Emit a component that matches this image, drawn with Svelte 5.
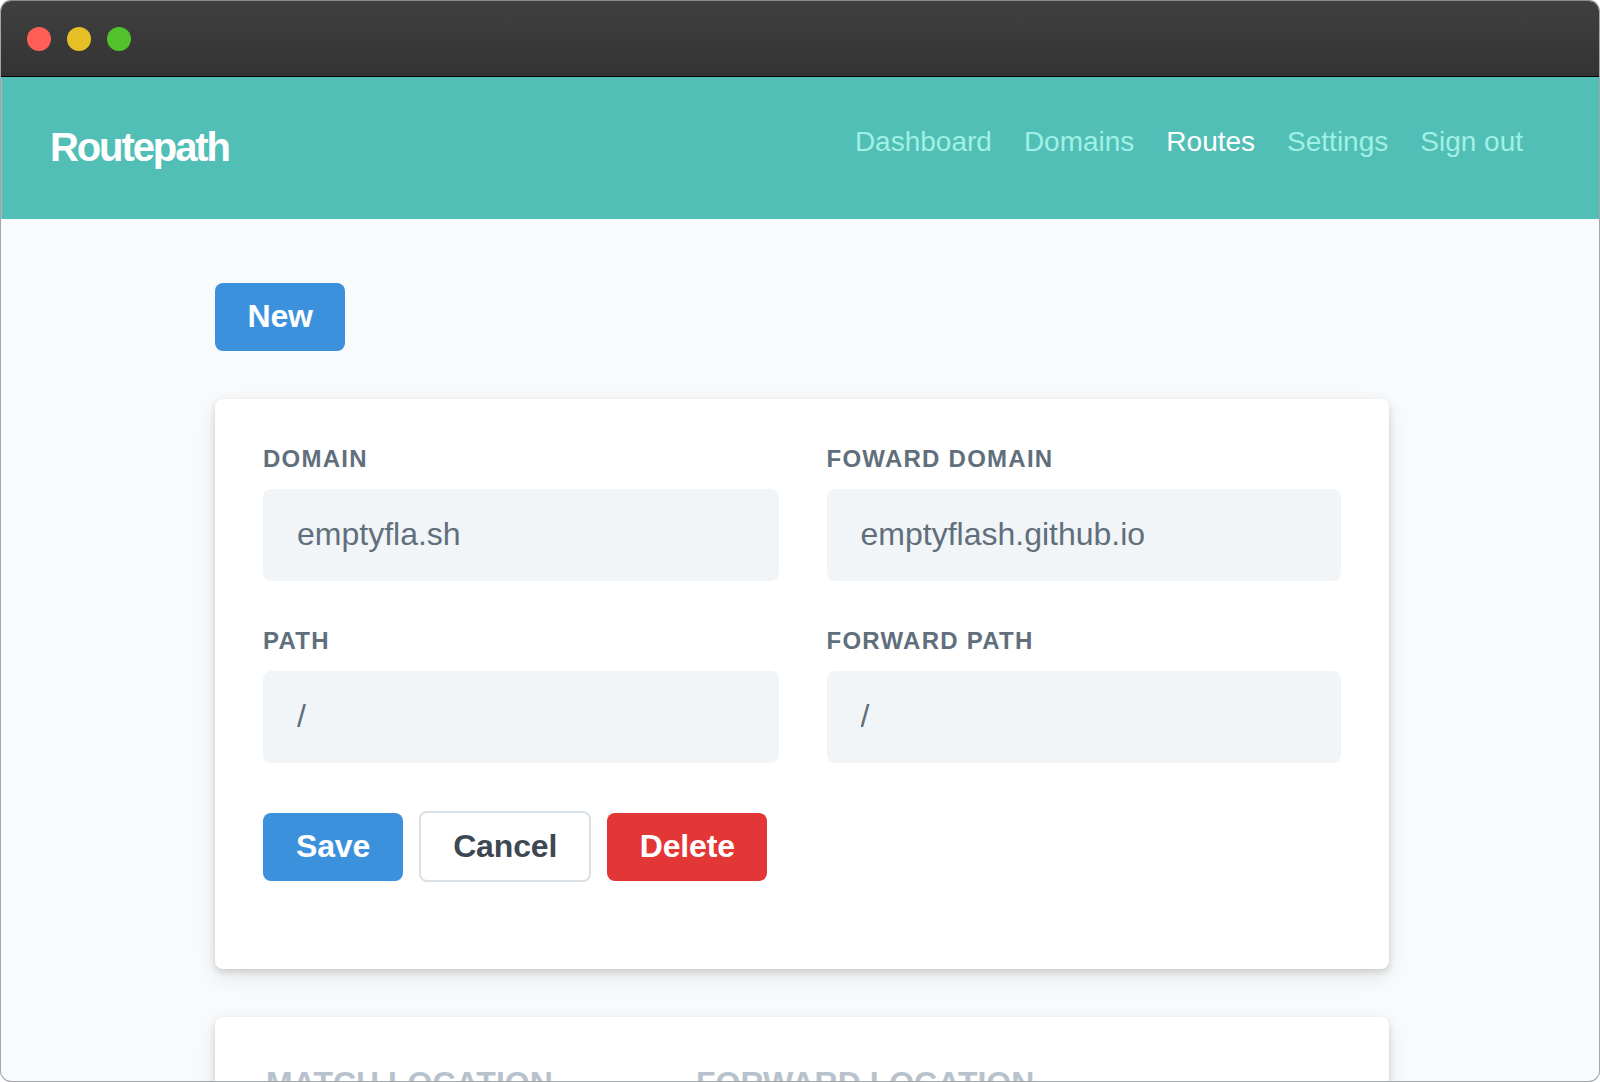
<script>
  const links = [
    { label: 'Dashboard', active: false },
    { label: 'Domains', active: false },
    { label: 'Routes', active: true },
    { label: 'Settings', active: false },
    { label: 'Sign out', active: false }
  ];
  const fields = [
    { label: 'Domain', value: 'emptyfla.sh' },
    { label: 'Foward Domain', value: 'emptyflash.github.io' },
    { label: 'Path', value: '/' },
    { label: 'Forward Path', value: '/' }
  ];
</script>

<div class="window">
  <div class="titlebar">
    <span class="dot red"></span>
    <span class="dot yellow"></span>
    <span class="dot green"></span>
  </div>
  <header class="header">
    <div class="logo">Routepath</div>
    <nav class="nav">
      {#each links as link}
        <a href="#top" class:active={link.active}>{link.label}</a>
      {/each}
    </nav>
  </header>
  <main class="main">
    <button class="btn blue new">New</button>
    <section class="card form">
      <div class="grid">
        {#each fields as f}
          <label class="field">
            <span class="label">{f.label}</span>
            <input class="input" value={f.value} />
          </label>
        {/each}
      </div>
      <div class="actions">
        <button class="btn blue save">Save</button>
        <button class="btn outline">Cancel</button>
        <button class="btn danger">Delete</button>
      </div>
    </section>
    <section class="card list">
      <div class="thead">
        <span class="th first">Match Location</span>
        <span class="th">Forward Location</span>
      </div>
    </section>
  </main>
</div>

<style>
  :global(body) {
    margin: 0;
    background: #fff;
    font-family: "Liberation Sans", Arial, sans-serif;
  }
  .window {
    box-sizing: border-box;
    height: 1082px;
    overflow: hidden;
    background: #f8fafc;
    border: 1px solid #a3a6a9;
    border-top-color: #8a8a8a;
    border-radius: 11px;
  }
  .titlebar {
    box-sizing: border-box;
    height: 76px;
    display: flex;
    align-items: center;
    gap: 16px;
    padding: 1px 0 0 26px;
    background: linear-gradient(#404040, #333333);
    border-bottom: 1px solid #000;
  }
  .dot {
    width: 24px;
    height: 24px;
    border-radius: 50%;
  }
  .red { background: #ff5f57; }
  .yellow { background: #e6bf27; }
  .green { background: #52c22c; }
  .header {
    box-sizing: border-box;
    height: 142px;
    display: flex;
    justify-content: space-between;
    padding: 45px 76px 0 48px;
    background: #51bfb5;
    border-left: 1px solid #8fbfba;
  }
  .logo {
    font-size: 40px;
    line-height: 50px;
    font-weight: 700;
    color: #fff;
    letter-spacing: -2.1px;
  }
  .nav {
    display: flex;
    gap: 32px;
    height: 36px;
    padding-top: 2px;
  }
  .nav a {
    font-size: 28px;
    line-height: 36px;
    color: #a0f0e6;
    text-decoration: none;
  }
  .nav a.active {
    color: #fff;
  }
  .main {
    width: 1174px;
    padding: 64px 0 0 214px;
  }
  .btn {
    box-sizing: border-box;
    height: 68px;
    padding: 0 32.5px 2px;
    border: 0;
    border-radius: 8px;
    font: 700 32px/40px "Liberation Sans", Arial, sans-serif;
    color: #fff;
    letter-spacing: -0.15px;
  }
  .blue { background: #3c91dc; }
  .danger { background: #e33636; }
  .save {
    padding: 0 33px 2px;
  }
  .outline {
    height: 71px;
    background: #fff;
    border: 2px solid #dae1e7;
    color: #3d4852;
    padding: 0 32px 2px;
  }
  .new {
    display: block;
  }
  .card {
    background: #fff;
    border-radius: 8px;
    box-shadow: 0 8px 24px rgba(0, 0, 0, 0.08), 0 3px 7px rgba(0, 0, 0, 0.14);
    margin-top: 48px;
  }
  .form {
    box-sizing: border-box;
    height: 570px;
    padding: 48px;
  }
  .grid {
    display: grid;
    grid-template-columns: 516px 514.5px;
    gap: 48px 47.5px;
  }
  .field {
    display: flex;
    flex-direction: column;
    gap: 18px;
  }
  .label {
    font-size: 24px;
    line-height: 24px;
    font-weight: 700;
    color: #606f7b;
    text-transform: uppercase;
    letter-spacing: 1.25px;
  }
  .input {
    box-sizing: border-box;
    width: 100%;
    height: 92px;
    padding: 0 34px 2px;
    border: 0;
    border-radius: 8px;
    background: #f1f5f8;
    color: #606f7b;
    font: 32px "Liberation Sans", Arial, sans-serif;
  }
  .actions {
    display: flex;
    align-items: center;
    gap: 16px;
    margin-top: 48px;
  }
  .list {
    height: 200px;
    padding: 46px 56px 0 51px;
  }
  .thead {
    display: flex;
  }
  .th {
    font-size: 32px;
    line-height: 40px;
    font-weight: 700;
    color: #b8c2cc;
    text-transform: uppercase;
  }
  .first {
    width: 430px;
  }
</style>
